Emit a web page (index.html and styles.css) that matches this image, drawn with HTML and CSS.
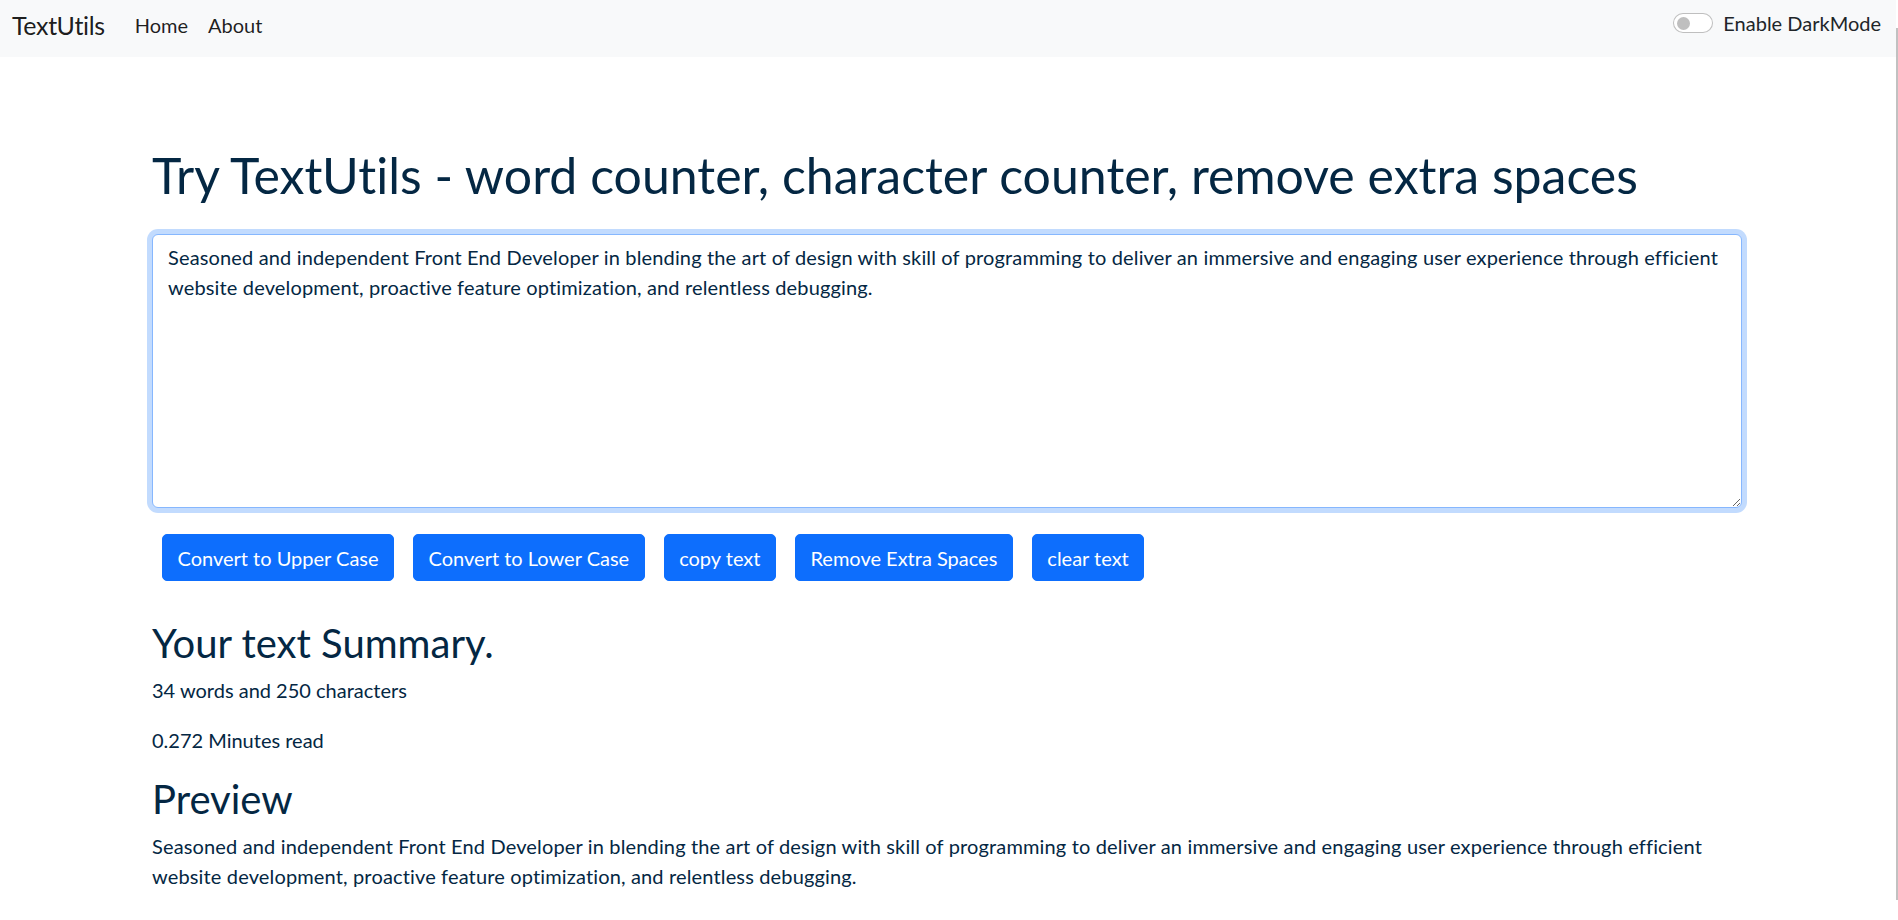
FILE: index.html
```html
<!DOCTYPE html>
<html lang="en">
<head>
<meta charset="utf-8">
<title>TextUtils</title>
<link rel="stylesheet" href="styles.css">
</head>
<body>
<nav class="navbar">
  <a class="brand" href="#">TextUtils</a>
  <ul class="nav-links">
    <li><a class="nav-link" href="#">Home</a></li>
    <li><a class="nav-link" href="#">About</a></li>
  </ul>
  <label class="switch-group">
    <span class="switch"><span class="knob"></span></span>
    <span class="switch-label">Enable DarkMode</span>
  </label>
</nav>

<main class="page">
  <div class="container">
    <h1 class="title">Try TextUtils - word counter, character counter, remove extra spaces</h1>
    <textarea class="text-box" spellcheck="false">Seasoned and independent Front End Developer in blending the art of design with skill of programming to deliver an immersive and engaging user experience through efficient website development, proactive feature optimization, and relentless debugging.</textarea>
    <div class="actions">
      <button class="btn">Convert to Upper Case</button>
      <button class="btn">Convert to Lower Case</button>
      <button class="btn">copy text</button>
      <button class="btn">Remove Extra Spaces</button>
      <button class="btn">clear text</button>
    </div>
    <section class="summary">
      <h2 class="sub">Your text Summary.</h2>
      <p class="line stat">34 words and 250 characters</p>
      <p class="line stat">0.272 Minutes read</p>
      <h2 class="sub">Preview</h2>
      <p class="line">Seasoned and independent Front End Developer in blending the art of design with skill of programming to deliver an immersive and engaging user experience through efficient website development, proactive feature optimization, and relentless debugging.</p>
    </section>
  </div>
</main>
<div class="scrollbar"><div class="thumb"></div></div>
</body>
</html>
```
FILE: styles.css
```css
html, body {
  margin: 0;
  padding: 0;
  overflow: hidden;
}
body {
  font-family: Lato, "Liberation Sans", sans-serif;
  font-variant-ligatures: none;
  font-size: 20px;
  line-height: 30px;
  color: #212529;
  background: #fff;
}
.navbar {
  height: 57px;
  box-sizing: border-box;
  background: #f8f9fa;
  display: flex;
  align-items: center;
  padding: 0 17px 7px 12px;
}
.brand {
  font-size: 25px;
  line-height: 37px;
  color: rgba(0, 0, 0, 0.9);
  text-decoration: none;
  margin-right: 20px;
  letter-spacing: -0.35px;
}
.nav-links {
  list-style: none;
  display: flex;
  margin: 0;
  padding: 0;
}
.nav-link {
  display: block;
  padding: 0 10px;
  color: rgba(0, 0, 0, 0.88);
  text-decoration: none;
}
.switch-group {
  margin-left: auto;
  display: flex;
  align-items: center;
  gap: 10px;
  margin-bottom: 4px;
}
.switch {
  width: 40px;
  height: 20px;
  box-sizing: border-box;
  border: 1px solid rgba(0, 0, 0, 0.25);
  border-radius: 10px;
  background: #fff;
  display: flex;
  align-items: center;
  padding-left: 3px;
}
.knob {
  width: 13px;
  height: 13px;
  border-radius: 50%;
  background: #bfbfbf;
}
.switch-label {
  color: #212529;
}
.page {
  padding-right: 4px;
}
.container {
  width: 1590px;
  margin: 0 auto;
  color: #042743;
}
.title {
  font-size: 50px;
  line-height: 60px;
  font-weight: 400;
  margin: 88px 0 29px;
}
.text-box {
  display: block;
  width: 100%;
  height: 274px;
  box-sizing: border-box;
  margin: 0;
  padding: 7px 15px;
  font-family: inherit;
  font-size: 20px;
  line-height: 30px;
  letter-spacing: 0.15px;
  color: #042743;
  background: #fff;
  border: 1px solid #86b7fe;
  border-radius: 6px;
  box-shadow: 0 0 0 5px rgba(13, 110, 253, 0.25);
  outline: none;
  resize: vertical;
}
.actions {
  display: flex;
  gap: 19px;
  padding-left: 10px;
  margin-top: 26px;
}
.btn {
  font-family: inherit;
  font-size: 20px;
  line-height: 30px;
  letter-spacing: 0;
  padding: 7.5px 14.5px;
  color: #fff;
  background: #0d6efd;
  border: 1px solid #0d6efd;
  border-radius: 5px;
  cursor: pointer;
}
.summary {
  margin-top: 38px;
}
.sub {
  font-size: 40px;
  line-height: 48px;
  font-weight: 400;
  margin: 0 0 8px;
}
.line {
  margin: 0 0 20px;
  letter-spacing: 0.15px;
}
.line.stat {
  letter-spacing: 0;
}
.scrollbar {
  position: fixed;
  top: 0;
  right: 0;
  width: 2px;
  height: 100%;
  background: #fff;
}
.thumb {
  margin-top: 28px;
  height: 872px;
  background: #c1c1c1;
}
```
